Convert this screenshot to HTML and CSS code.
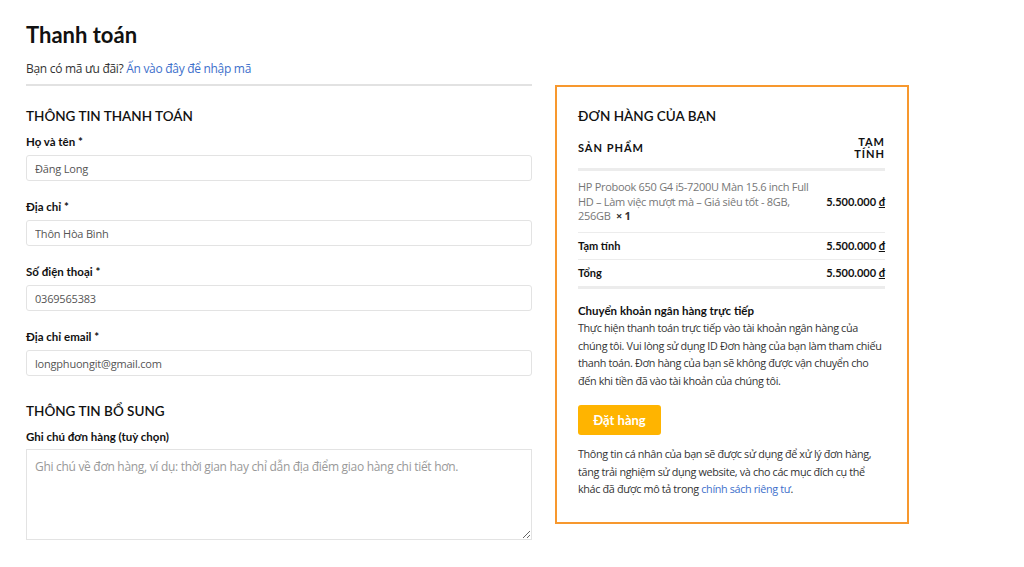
FILE: index.html
```html
<!DOCTYPE html>
<html lang="vi">
<head>
    <meta charset="UTF-8">
    <meta name="viewport" content="width=device-width, initial-scale=1.0">
    <title>Thanh toán</title>
    <link rel="stylesheet" href="styles.css">
</head>
<body>
    <div class="page">
        <h1>Thanh toán</h1>

        <div class="coupon">
            Bạn có mã ưu đãi? <a href="#">Ấn vào đây để nhập mã</a>
        </div>

        <div class="checkout">
            <form class="billing">
                <h3>THÔNG TIN THANH TOÁN</h3>

                <div class="form-group">
                    <label for="name">Họ và tên *</label>
                    <input type="text" id="name" value="Đăng Long">
                </div>
                <div class="form-group">
                    <label for="address">Địa chỉ *</label>
                    <input type="text" id="address" value="Thôn Hòa Bình">
                </div>
                <div class="form-group">
                    <label for="phone">Số điện thoại *</label>
                    <input type="text" id="phone" value="0369565383">
                </div>
                <div class="form-group">
                    <label for="email">Địa chỉ email *</label>
                    <input type="email" id="email" value="longphuongit@gmail.com">
                </div>

                <h3 class="extra">THÔNG TIN BỔ SUNG</h3>
                <div class="form-group">
                    <label for="note">Ghi chú đơn hàng (tuỳ chọn)</label>
                    <textarea id="note" placeholder="Ghi chú về đơn hàng, ví dụ: thời gian hay chỉ dẫn địa điểm giao hàng chi tiết hơn."></textarea>
                </div>
            </form>

            <div class="order">
                <h3>ĐƠN HÀNG CỦA BẠN</h3>
                <table class="order-table">
                    <thead>
                        <tr>
                            <th>SẢN PHẨM</th>
                            <th class="sub">TẠM TÍNH</th>
                        </tr>
                    </thead>
                    <tbody>
                        <tr class="item">
                            <td>HP Probook 650 G4 i5-7200U Màn 15.6 inch Full HD – Làm việc mượt mà – Giá siêu tốt - 8GB, 256GB <strong class="qty">× 1</strong></td>
                            <td class="price">5.500.000 <u>đ</u></td>
                        </tr>
                    </tbody>
                    <tfoot>
                        <tr>
                            <th>Tạm tính</th>
                            <td class="price">5.500.000 <u>đ</u></td>
                        </tr>
                        <tr class="total">
                            <th>Tổng</th>
                            <td class="price">5.500.000 <u>đ</u></td>
                        </tr>
                    </tfoot>
                </table>

                <div class="payment">
                    <strong>Chuyển khoản ngân hàng trực tiếp</strong>
                    <p>Thực hiện thanh toán trực tiếp vào tài khoản ngân hàng của chúng tôi. Vui lòng sử dụng ID Đơn hàng của bạn làm tham chiếu thanh toán. Đơn hàng của bạn sẽ không được vận chuyển cho đến khi tiền đã vào tài khoản của chúng tôi.</p>
                </div>

                <button type="button">Đặt hàng</button>

                <p class="privacy">Thông tin cá nhân của bạn sẽ được sử dụng để xử lý đơn hàng, tăng trải nghiệm sử dụng website, và cho các mục đích cụ thể khác đã được mô tả trong <a href="#">chính sách riêng tư</a>.</p>
            </div>
        </div>
    </div>
</body>
</html>
```

FILE: styles.css
```css
body {
    margin: 0;
    background: #fff;
    color: #333;
    font-family: "Open Sans", "Noto Sans", sans-serif;
    letter-spacing: -0.3px;
}
a {
    color: #3d6fcb;
    text-decoration: none;
}
.page {
    padding: 0 26px;
}
h1 {
    font-family: Lato, sans-serif;
    font-size: 22px;
    font-weight: 700;
    line-height: 28px;
    letter-spacing: 0;
    color: #111;
    margin: 21px 0 11px;
}
h3 {
    font-family: Lato, sans-serif;
    font-size: 13.5px;
    font-weight: 600;
    line-height: 20px;
    letter-spacing: 0;
    color: #111;
    margin: 0 0 8px;
}
.coupon {
    width: 506px;
    font-size: 12px;
    line-height: 18px;
    padding-bottom: 6px;
    border-bottom: 2px solid #e2e2e2;
}
.checkout {
    display: grid;
    grid-template-columns: 506px 354px;
    gap: 23px;
    align-items: start;
}
.billing {
    padding-top: 20px;
}
.form-group {
    margin-bottom: 18px;
}
label {
    display: block;
    font-family: Lato, sans-serif;
    font-size: 11.5px;
    font-weight: 700;
    line-height: 16px;
    letter-spacing: 0;
    color: #111;
    margin-bottom: 5px;
}
input[type="text"], input[type="email"] {
    display: block;
    width: 100%;
    height: 26px;
    padding: 0 8px;
    border: 1px solid #e3e3e3;
    border-radius: 3px;
    box-sizing: border-box;
    font-family: "Open Sans", sans-serif;
    font-size: 11px;
    letter-spacing: -0.2px;
    color: #555;
}
h3.extra {
    margin-top: 25px;
}
textarea {
    display: block;
    width: 100%;
    height: 91px;
    padding: 8px 8px;
    border: 1px solid #e3e3e3;
    box-sizing: border-box;
    font-family: "Open Sans", sans-serif;
    font-size: 12px;
    letter-spacing: -0.3px;
    margin-top: -1px;
}
textarea::placeholder {
    color: #999;
}
.order {
    margin-top: -1px;
    border: 2px solid #f7982e;
    padding: 19px 22px 24px 21px;
}
.order h3 {
    margin-bottom: 10px;
}
.order-table {
    width: 100%;
    border-collapse: collapse;
    font-size: 11px;
}
.order-table thead th {
    font-family: Lato, sans-serif;
    font-size: 11px;
    font-weight: 700;
    letter-spacing: 1px;
    color: #111;
    line-height: 12px;
    text-align: left;
    padding: 0 0 8px;
    border-bottom: 3px solid #ececec;
}
.order-table thead th.sub {
    text-align: right;
    width: 40px;
}
.item td {
    color: #777;
    line-height: 14.5px;
    padding: 9px 14px 8px 0;
    border-bottom: 1px solid #ececec;
}
.item .qty {
    color: #333;
    margin-left: 3px;
}
.order-table .price {
    font-family: Lato, sans-serif;
    text-align: right;
    font-weight: 700;
    letter-spacing: 0;
    color: #111;
    white-space: nowrap;
    padding-right: 0;
}
.order-table tfoot th, .order-table tfoot td {
    font-family: Lato, sans-serif;
    font-size: 11px;
    font-weight: 700;
    letter-spacing: 0;
    color: #111;
    text-align: left;
    line-height: 14px;
    padding: 6px 0;
    border-bottom: 1px solid #ececec;
}
.order-table tfoot td.price {
    text-align: right;
}
.order-table tfoot .total th, .order-table tfoot .total td {
    border-bottom: 3px solid #ececec;
}
.payment {
    margin-top: 13px;
    font-size: 10.8px;
    line-height: 17.5px;
    letter-spacing: -0.35px;
}
.payment strong {
    font-family: Lato, sans-serif;
    font-size: 11.5px;
    letter-spacing: 0;
    color: #111;
}
.payment p {
    margin: 0;
}
button {
    margin-top: 16px;
    width: 83px;
    height: 30px;
    background: #ffb400;
    border: none;
    border-radius: 3px;
    color: #fff;
    font-family: Lato, sans-serif;
    font-size: 13px;
    font-weight: 700;
    cursor: pointer;
}
.privacy {
    font-size: 10.8px;
    line-height: 17.5px;
    letter-spacing: -0.35px;
    margin: 10px 0 0;
}
```
